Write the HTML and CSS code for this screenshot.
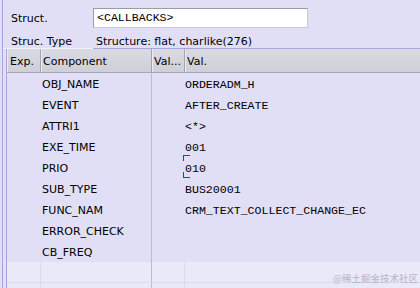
FILE: index.html
```html
<!DOCTYPE html>
<html>
<head>
    <meta charset="UTF-8">
    <title>Callbacks</title>
    <link rel="stylesheet" href="styles.css">
</head>
<body>
    <div id="screen">
        <div class="field">
            <span class="label">Struct.</span>
            <span class="input">&lt;CALLBACKS&gt;</span>
        </div>
        <div class="field info">
            <span class="label">Struc. Type</span>
            <span class="value">Structure: flat, charlike(276)</span>
        </div>
        <div class="grid">
            <div class="row head">
                <div class="cell">Exp.</div>
                <div class="cell">Component</div>
                <div class="cell">Val...</div>
                <div class="cell">Val.</div>
            </div>
            <div class="row"><div class="cell"></div><div class="cell">OBJ_NAME</div><div class="cell"></div><div class="cell mono">ORDERADM_H</div></div>
            <div class="row"><div class="cell"></div><div class="cell">EVENT</div><div class="cell"></div><div class="cell mono">AFTER_CREATE</div></div>
            <div class="row"><div class="cell"></div><div class="cell">ATTRI1</div><div class="cell"></div><div class="cell mono">&lt;*&gt;</div></div>
            <div class="row"><div class="cell"></div><div class="cell">EXE_TIME</div><div class="cell"></div><div class="cell mono">001</div></div>
            <div class="row"><div class="cell"></div><div class="cell">PRIO</div><div class="cell"></div><div class="cell mono focus">010</div></div>
            <div class="row"><div class="cell"></div><div class="cell">SUB_TYPE</div><div class="cell"></div><div class="cell mono">BUS20001</div></div>
            <div class="row"><div class="cell"></div><div class="cell">FUNC_NAM</div><div class="cell"></div><div class="cell mono">CRM_TEXT_COLLECT_CHANGE_EC</div></div>
            <div class="row"><div class="cell"></div><div class="cell">ERROR_CHECK</div><div class="cell"></div><div class="cell mono"></div></div>
            <div class="row"><div class="cell"></div><div class="cell">CB_FREQ</div><div class="cell"></div><div class="cell mono"></div></div>
            <div class="row empty"><div class="cell"></div><div class="cell"></div><div class="cell"></div><div class="cell"></div></div>
            <div class="row empty"><div class="cell"></div><div class="cell"></div><div class="cell"></div><div class="cell"></div></div>
        </div>
        <div class="mark">@稀土掘金技术社区</div>
    </div>
</body>
</html>
```

FILE: styles.css
```css
* {
    margin: 0;
    padding: 0;
    box-sizing: border-box;
}
body {
    background: #e1dff5;
    font-family: "DejaVu Sans", "Noto Sans CJK SC", sans-serif;
    font-size: 11px;
    color: #000;
}
#screen {
    position: relative;
    height: 288px;
    margin-left: 2px;
    border-left: 1px solid #a9a5d9;
    overflow: hidden;
}
.field {
    display: flex;
    align-items: center;
    height: 20px;
    margin-top: 8px;
}
.field .label {
    width: 90px;
    padding-left: 8px;
}
.field .input {
    width: 215px;
    height: 20px;
    line-height: 18px;
    padding-left: 3px;
    background: #fff;
    border: 1px solid #9c9ca4;
    border-right-color: #c8c8d0;
    border-bottom-color: #c8c8d0;
    font-family: "Liberation Mono", monospace;
    font-size: 11.6px;
}
.field.info {
    height: 21px;
    margin-top: 0;
    padding-top: 7px;
    border-bottom: 1px solid #a9a5d9;
}
.field.info .label {
    align-self: stretch;
    border-bottom: 1px solid #f2f1fb;
    margin-bottom: -1px;
}
.field.info .value {
    padding-left: 3px;
}
.grid {
    margin-left: 3px;
    border-left: 1px solid #a9a5d9;
}
.row {
    display: grid;
    grid-template-columns: 34px 111px 33px 1fr;
    height: 21px;
    align-items: center;
}
.row .cell {
    height: 100%;
    display: flex;
    align-items: center;
    padding-top: 2px;
    white-space: nowrap;
}
.row .cell:nth-child(2) {
    padding-left: 1px;
    border-right: 1px solid #bdbbd3;
}
.head {
    height: 24px;
    background: linear-gradient(#dadae2, #cfcfd8);
    border-bottom: 1px solid #a8a8b4;
}
.head .cell {
    padding-top: 1px;
    border-right: 1px solid #a4a4ae;
    box-shadow: inset 1px 0 0 #ececf2;
}
.head .cell:nth-child(1) {
    padding-left: 3px;
}
.head .cell:nth-child(2) {
    padding-left: 2px;
    border-right: 1px solid #a4a4ae;
}
.head .cell:nth-child(3) {
    padding-left: 2px;
}
.head .cell:nth-child(4) {
    padding-left: 2px;
    border-right: none;
}
.mono {
    font-family: "Liberation Mono", monospace;
    font-size: 11.6px;
}
.focus {
    position: relative;
}
.focus::before,
.focus::after {
    content: "";
    position: absolute;
    left: -2px;
    width: 6px;
    height: 5px;
    border-left: 1px solid #e00000;
}
.focus::before {
    top: -2px;
    border-top: 1px solid #e00000;
}
.focus::after {
    bottom: 0;
    border-bottom: 1px solid #e00000;
}
.empty {
    background: #eae9f7;
    border-bottom: 1px solid #dcdaf0;
    height: 21px;
}
.empty .cell {
    border-right: 1px solid #dcdaf0;
}
.empty .cell:nth-child(2) {
    border-right: 1px solid #bdbbd3;
}
.empty .cell:nth-child(4) {
    border-right: none;
}
.mark {
    position: absolute;
    right: 2px;
    bottom: 3px;
    font-size: 9.5px;
    color: #b4b3c4;
    font-family: "Noto Sans CJK SC", sans-serif;
}
```
